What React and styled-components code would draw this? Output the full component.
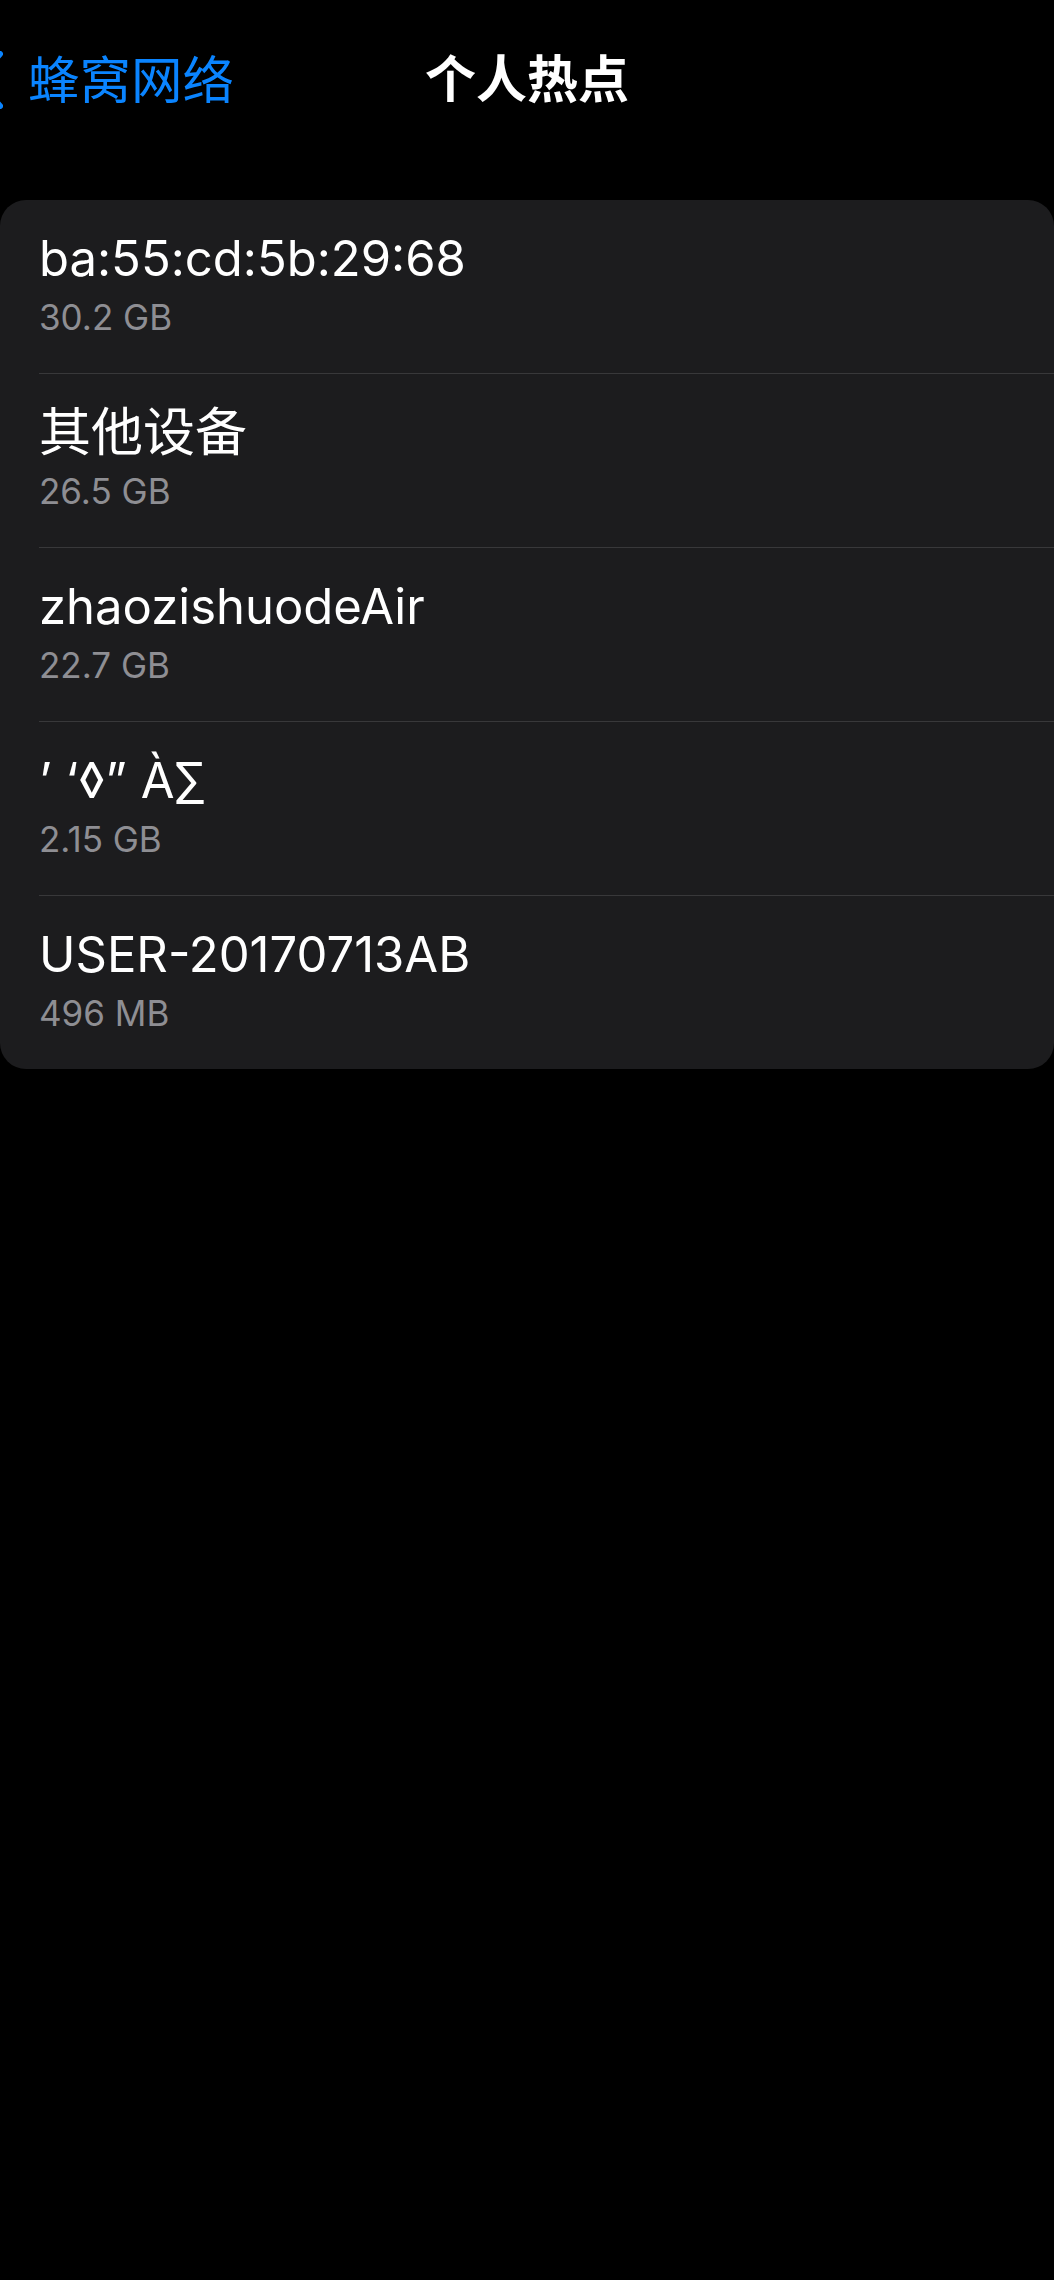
import React from 'react';
import styled, { createGlobalStyle } from 'styled-components';

const GlobalStyle = createGlobalStyle`
  html, body {
    margin: 0;
    padding: 0;
    background: #000;
  }
  body {
    font-family: Inter, "Noto Sans CJK SC", "Liberation Sans", sans-serif;
    -webkit-font-smoothing: antialiased;
  }
`;

const Screen = styled.div`
  width: 1054px;
  min-height: 2280px;
  background: #000;
  overflow: hidden;
`;

const NavBar = styled.div`
  display: grid;
  grid-template-columns: 1fr auto 1fr;
  align-items: center;
  height: 160px;
`;

const BackButton = styled.div`
  display: flex;
  align-items: center;
  gap: 25px;
  color: #0a84ff;
  font-size: 51.5px;
  line-height: 60px;
`;

const Chevron = styled.svg`
  width: 30px;
  height: 58px;
  margin-left: -27px;
  flex-shrink: 0;
`;

const Title = styled.div`
  color: #fff;
  font-size: 51px;
  font-weight: 600;
  line-height: 60px;
  text-align: center;
`;

const Card = styled.div`
  margin-top: 40px;
  background: #1c1c1e;
  border-radius: 26px;
  overflow: hidden;
`;

const Row = styled.div`
  margin-left: 39px;
  padding: 29px 0 35px;
  display: flex;
  flex-direction: column;

  & + & {
    border-top: 1px solid #38383a;
  }
`;

const Name = styled.div`
  color: #fff;
  font-size: ${(p) => (p.$cjk ? '52px' : '49px')};
  line-height: 60px;
  white-space: nowrap;
`;

const Usage = styled.div`
  margin-top: 7px;
  color: #8e8e93;
  font-size: 35px;
  line-height: 42px;
`;

const devices = [
  { name: 'ba:55:cd:5b:29:68', usage: '30.2 GB' },
  { name: '其他设备', usage: '26.5 GB', cjk: true },
  { name: 'zhaozishuodeAir', usage: '22.7 GB' },
  { name: '’ ‘◊” À∑', usage: '2.15 GB' },
  { name: 'USER-20170713AB', usage: '496 MB' },
];

export default function App() {
  return (
    <Screen>
      <GlobalStyle />
      <NavBar>
        <BackButton>
          <Chevron viewBox="0 0 30 58">
            <path
              d="M27 3 L3 29 L27 55"
              fill="none"
              stroke="#0a84ff"
              strokeWidth="6"
              strokeLinecap="round"
              strokeLinejoin="round"
            />
          </Chevron>
          <span>蜂窝网络</span>
        </BackButton>
        <Title>个人热点</Title>
        <div />
      </NavBar>
      <Card>
        {devices.map((d) => (
          <Row key={d.name}>
            <Name $cjk={d.cjk}>{d.name}</Name>
            <Usage>{d.usage}</Usage>
          </Row>
        ))}
      </Card>
    </Screen>
  );
}
